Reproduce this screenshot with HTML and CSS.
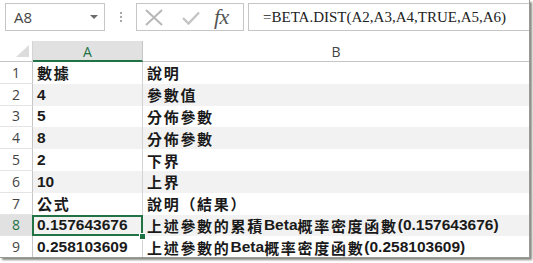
FILE: index.html
```html
<!DOCTYPE html>
<html>
<head>
<meta charset="utf-8">
<link rel="stylesheet" href="styles.css">
</head>
<body>
<div class="page">
  <div class="fbar">
    <div class="namebox"><span class="ref">A8</span><span class="caret"></span></div>
    <div class="dots"><i></i><i></i><i></i></div>
    <div class="btns">
      <svg class="ic-x" width="18" height="17" viewBox="0 0 18 17"><path d="M1 1L17 16M17 1L1 16" stroke="#b8b8b8" stroke-width="2" fill="none"/></svg>
      <svg class="ic-ok" width="18" height="14" viewBox="0 0 18 14"><path d="M1 7L6.5 12.5L17 1.5" stroke="#c4c4c4" stroke-width="2.4" fill="none"/></svg>
      <span class="fx">fx</span>
    </div>
    <div class="formula">=BETA.DIST(A2,A3,A4,TRUE,A5,A6)</div>
  </div>
  <div class="grid">
    <div class="corner"><span class="tri"></span></div>
    <div class="colh sel">A</div>
    <div class="colh">B</div>

    <div class="rh">1</div>
    <div class="c a"><span class="zh">數據</span></div>
    <div class="c b"><span class="zh">說明</span></div>

    <div class="rh">2</div>
    <div class="c a even">4</div>
    <div class="c b even"><span class="zh">參數值</span></div>

    <div class="rh">3</div>
    <div class="c a">5</div>
    <div class="c b"><span class="zh">分佈參數</span></div>

    <div class="rh">4</div>
    <div class="c a even">8</div>
    <div class="c b even"><span class="zh">分佈參數</span></div>

    <div class="rh">5</div>
    <div class="c a">2</div>
    <div class="c b"><span class="zh">下界</span></div>

    <div class="rh">6</div>
    <div class="c a even">10</div>
    <div class="c b even"><span class="zh">上界</span></div>

    <div class="rh">7</div>
    <div class="c a"><span class="zh">公式</span></div>
    <div class="c b"><span class="zh">說明（結果）</span></div>

    <div class="rh rsel">8</div>
    <div class="c a even active">0.157643676</div>
    <div class="c b even"><span class="zh">上述參數的累積</span>Beta<span class="zh">概率密度函數</span>(0.157643676)</div>

    <div class="rh">9</div>
    <div class="c a">0.258103609</div>
    <div class="c b"><span class="zh">上述參數的</span>Beta<span class="zh">概率密度函數</span>(0.258103609)</div>
  </div>
</div>
</body>
</html>
```

FILE: styles.css
```css
* { box-sizing: border-box; }
html, body { margin: 0; padding: 0; background: #fff; }
body { width: 533px; height: 263px; overflow: hidden; }

.page {
  width: 530px;
  height: 258px;
  overflow: hidden;
  background: #fff;
  border-right: 1px solid #9a9a94;
  border-bottom: 1px solid #9a9a94;
  box-shadow: 2px 2px 2px #8a8a84;
}

/* formula bar */
.fbar {
  display: flex;
  align-items: flex-start;
  height: 31px;
  padding-top: 3px;
}
.namebox {
  margin-left: 5px;
  width: 100px;
  height: 28px;
  border: 1px solid #c6c6c6;
  display: flex;
  align-items: center;
  justify-content: space-between;
  padding: 0 6px 0 8px;
}
.ref {
  font: 15px "Open Sans", "Noto Sans", sans-serif;
  color: #444;
}
.caret {
  width: 0; height: 0;
  border-left: 4px solid transparent;
  border-right: 4px solid transparent;
  border-top: 4px solid #6a6a6a;
}
.dots {
  margin-left: 15px;
  height: 28px;
  display: flex;
  flex-direction: column;
  justify-content: center;
  gap: 2px;
}
.dots i {
  display: block;
  width: 2px; height: 2px;
  background: #a8a8a8;
}
.btns {
  margin-left: 14px;
  width: 108px;
  height: 28px;
  border: 1px solid #c6c6c6;
  display: flex;
  align-items: center;
  padding-left: 8px;
}
.ic-x { margin-top: 1px; }
.ic-ok { margin-left: 19px; margin-top: 1px; }
.fx {
  margin-left: 14px;
  font: italic 22px "Liberation Serif", serif;
  color: #555;
  letter-spacing: -0.5px;
  line-height: 1;
  margin-top: -1px;
}
.formula {
  margin-left: 4px;
  flex: 1;
  height: 28px;
  border: 1px solid #c6c6c6;
  border-right: none;
  padding-left: 14px;
  font: 15px "Liberation Serif", serif;
  color: #222;
  line-height: 26px;
  white-space: nowrap;
}

/* sheet grid */
.grid {
  margin-top: 10px;
  display: grid;
  grid-template-columns: 33px 110px 1fr;
  grid-template-rows: 21px repeat(9, 21.8px);
}
.corner {
  border-right: 1px solid #d4d4d4;
  border-bottom: 1px solid #c6c6c6;
  display: flex;
  justify-content: flex-end;
  align-items: flex-end;
  padding: 0 3px 4px 0;
}
.tri {
  width: 0; height: 0;
  border-left: 13px solid transparent;
  border-bottom: 12px solid #dcdcdc;
}
.colh {
  font: 14px "Open Sans", "Noto Sans", sans-serif;
  color: #444;
  display: flex;
  align-items: center;
  justify-content: center;
  border-bottom: 1px solid #c6c6c6;
  padding-top: 1px;
}
.colh.sel {
  background: #e1e1e1;
  color: #217346;
  border-right: 1px solid #c6c6c6;
  border-bottom: 2px solid #217346;
}
.rh {
  font: 14px "Open Sans", "Noto Sans", sans-serif;
  color: #444;
  display: flex;
  align-items: center;
  justify-content: center;
  border-right: 1px solid #c6c6c6;
  border-bottom: 1px solid #e4e4e4;
}
.rh.rsel {
  background: #e1e1e1;
  color: #217346;
}
.c {
  font: 700 15.5px "Liberation Sans", "Noto Sans CJK TC", sans-serif;
  color: #1a1a1a;
  display: flex;
  align-items: center;
  white-space: nowrap;
  padding-left: 4px;
}
.c.a { border-right: 1px solid #d4d4d4; }
.c.even { background: #f2f2f2; }
.zh {
  font-family: "Noto Sans CJK TC", sans-serif;
  font-size: 15px;
  font-weight: 700;
  letter-spacing: 1.7px;
}
.c.active {
  position: relative;
}
.c.active::before {
  content: "";
  position: absolute;
  left: -1px; top: 0; right: -1px; bottom: 0;
  border: 2px solid #217346;
}
.c.active::after {
  content: "";
  position: absolute;
  right: -3px; bottom: -3px;
  width: 5px; height: 5px;
  background: #217346;
  border: 1px solid #fff;
  box-sizing: content-box;
  margin: -1px;
}
```
